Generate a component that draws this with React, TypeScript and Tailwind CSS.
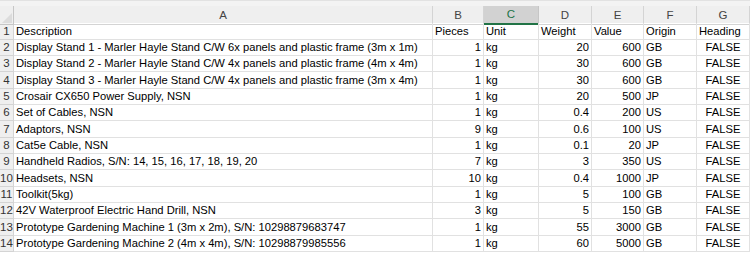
import React from "react"

const cols = ["A", "B", "C", "D", "E", "F", "G"]

const rows: string[][] = [
  ["Description", "Pieces", "Unit", "Weight", "Value", "Origin", "Heading"],
  ["Display Stand 1 - Marler Hayle Stand C/W 6x panels and plastic frame (3m x 1m)", "1", "kg", "20", "600", "GB", "FALSE"],
  ["Display Stand 2 - Marler Hayle Stand C/W 4x panels and plastic frame (4m x 4m)", "1", "kg", "30", "600", "GB", "FALSE"],
  ["Display Stand 3 - Marler Hayle Stand C/W 4x panels and plastic frame (3m x 4m)", "1", "kg", "30", "600", "GB", "FALSE"],
  ["Crosair CX650 Power Supply, NSN", "1", "kg", "20", "500", "JP", "FALSE"],
  ["Set of Cables, NSN", "1", "kg", "0.4", "200", "US", "FALSE"],
  ["Adaptors, NSN", "9", "kg", "0.6", "100", "US", "FALSE"],
  ["Cat5e Cable, NSN", "1", "kg", "0.1", "20", "JP", "FALSE"],
  ["Handheld Radios, S/N: 14, 15, 16, 17, 18, 19, 20", "7", "kg", "3", "350", "US", "FALSE"],
  ["Headsets, NSN", "10", "kg", "0.4", "1000", "JP", "FALSE"],
  ["Toolkit(5kg)", "1", "kg", "5", "100", "GB", "FALSE"],
  ["42V Waterproof Electric Hand Drill, NSN", "3", "kg", "5", "150", "GB", "FALSE"],
  ["Prototype Gardening Machine 1 (3m x 2m), S/N: 10298879683747", "1", "kg", "55", "3000", "GB", "FALSE"],
  ["Prototype Gardening Machine 2 (4m x 4m), S/N: 10298879985556", "1", "kg", "60", "5000", "GB", "FALSE"],
]

const heights = ["h-[17px]", "h-[16px]", "h-[16px]", "h-[17px]", "h-[16px]", "h-[16px]", "h-[17px]", "h-[16px]", "h-[16px]", "h-[17px]", "h-[16px]", "h-[16px]", "h-[17px]", "h-[16px]"]

const gridCols = "grid grid-cols-[14px_419px_51px_55px_53px_52px_53px_53px]"

function cellAlign(r: number, c: number) {
  if (r === 0) return "justify-start pl-[2px]"
  if (c === 1 || c === 3 || c === 4) return "justify-end pr-[2px]"
  if (c === 6) return "justify-center"
  return "justify-start pl-[2px]"
}

export default function App() {
  return (
    <div
      className="w-[750px] h-[257px] bg-white overflow-hidden text-black"
      style={{ fontFamily: '"Liberation Sans", Arial, sans-serif' }}
    >
      <div className="h-[6px] bg-[#f3f3f3] border-t border-[#e2e2e2]" />
      <div className={`${gridCols} h-[17px] bg-[#efefef] text-[11.5px] text-[#444]`}>
        <div className="relative border-r border-b border-[#c6c6c6]">
          <div className="absolute right-[1px] bottom-[1px] w-0 h-0 border-l-[10px] border-l-transparent border-b-[10px] border-b-[#dcdcdc]" />
        </div>
        {cols.map((c) =>
          c === "C" ? (
            <div key={c} className="flex items-center justify-center bg-[#d2d2d2] text-[#217346] border-r border-[#c6c6c6] border-b-2 border-b-[#217346]">
              {c}
            </div>
          ) : (
            <div key={c} className="flex items-center justify-center border-r border-b border-[#d4d4d4]">
              {c}
            </div>
          )
        )}
      </div>
      {rows.map((row, r) => (
        <div key={r} className={`${gridCols} ${heights[r]} text-[11.2px] leading-none`}>
          <div className="flex items-end pb-[2px] justify-center bg-[#efefef] text-[#333] text-[11.5px] border-r border-b border-[#d4d4d4]">
            {r + 1}
          </div>
          {row.map((v, c) => (
            <div
              key={c}
              className={`flex items-end pb-[2px] whitespace-nowrap overflow-hidden border-r border-b border-[#e1e1e1] ${cellAlign(r, c)}`}
            >
              {v}
            </div>
          ))}
        </div>
      ))}
    </div>
  )
}
